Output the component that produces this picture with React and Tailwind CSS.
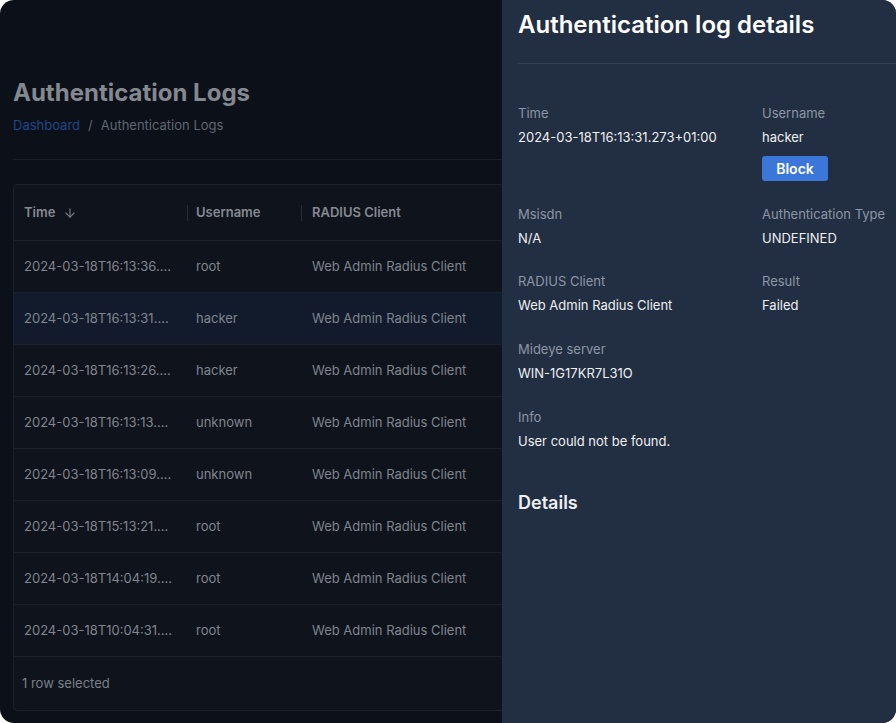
import { ArrowDown } from 'lucide-react';

const rows = [
  { time: '2024-03-18T16:13:36.…', user: 'root' },
  { time: '2024-03-18T16:13:31.…', user: 'hacker', selected: true },
  { time: '2024-03-18T16:13:26.…', user: 'hacker' },
  { time: '2024-03-18T16:13:13.…', user: 'unknown' },
  { time: '2024-03-18T16:13:09.…', user: 'unknown' },
  { time: '2024-03-18T15:13:21.…', user: 'root' },
  { time: '2024-03-18T14:04:19.…', user: 'root' },
  { time: '2024-03-18T10:04:31.…', user: 'root' },
];

function Field({ label, value, className = '', children }) {
  return (
    <div className={className}>
      <div className="text-[13px] leading-5 text-[#8d96a4]">{label}</div>
      <div className="mt-1 text-[13px] leading-5 text-[#eef0f3]">{value}</div>
      {children}
    </div>
  );
}

export default function App() {
  return (
    <div className="w-[896px] h-[723px] bg-white" style={{ fontFamily: 'Inter, "Noto Sans", sans-serif' }}>
      <div className="w-full h-full rounded-[14px] overflow-hidden flex bg-[#0c1119]">
        {/* dimmed page */}
        <div className="w-[502px] shrink-0 overflow-hidden pl-[13px] pt-[77px]">
          <div className="w-[560px]">
            <h1 className="text-[24px] leading-8 font-bold text-[#84888f]">Authentication Logs</h1>
            <div className="mt-[6px] text-[13px] leading-5 text-[#5f6670] flex gap-2">
              <span className="text-[#1f4787]">Dashboard</span>
              <span>/</span>
              <span>Authentication Logs</span>
            </div>
            <div className="mt-[24px] h-px bg-[#1a2029]" />
            <div className="mt-[24px] border border-[#1b212a] rounded-[4px] bg-[#0e131c] text-[13px]">
              <div className="grid grid-cols-[173px_114px_1fr] h-[56px] items-center border-b border-[#1b212a] font-semibold text-[#858a91]">
                <div className="pl-[10px] flex items-center gap-2">
                  Time <ArrowDown size={14} strokeWidth={2} className="text-[#767b82]" />
                </div>
                <div className="flex items-center">
                  <span className="w-px h-[16px] bg-[#2a3039]" />
                  <span className="pl-[8px]">Username</span>
                </div>
                <div className="flex items-center">
                  <span className="w-px h-[16px] bg-[#2a3039]" />
                  <span className="pl-[10px]">RADIUS Client</span>
                </div>
              </div>
              {rows.map((r) => (
                <div
                  key={r.time}
                  className={`grid grid-cols-[173px_114px_1fr] h-[52px] items-center border-b border-[#1b212a] text-[#80858c] ${r.selected ? 'bg-[#111b2c]' : ''}`}
                >
                  <div className="pl-[10px]">{r.time}</div>
                  <div className="pl-[9px]">{r.user}</div>
                  <div className="pl-[11px]">Web Admin Radius Client</div>
                </div>
              ))}
              <div className="h-[53px] flex items-center pl-[8px] text-[13px] text-[#7b8087]">1 row selected</div>
            </div>
          </div>
        </div>

        {/* drawer */}
        <div className="flex-1 bg-[#222e42] pl-4 pt-[9px]">
          <h2 className="text-[24px] leading-8 font-semibold text-white">Authentication log details</h2>
          <div className="mt-[22px] h-px bg-[#344055]" />
          <div className="mt-[39px] grid grid-cols-[244px_1fr] gap-y-[23px]">
            <Field label="Time" value="2024-03-18T16:13:31.273+01:00" />
            <Field label="Username" value="hacker">
              <button className="mt-[9px] h-[25px] w-[66px] rounded-[3px] bg-[#3b77d8] text-[14px] font-semibold text-white">
                Block
              </button>
            </Field>
            <Field label="Msisdn" value="N/A" />
            <Field label="Authentication Type" value="UNDEFINED" />
            <Field label="RADIUS Client" value="Web Admin Radius Client" />
            <Field label="Result" value="Failed" />
            <Field label="Mideye server" value="WIN-1G17KR7L31O" className="mt-px" />
            <div />
            <Field label="Info" value="User could not be found." className="mt-px" />
            <div />
          </div>
          <h3 className="mt-[38px] text-[18px] leading-7 font-semibold text-[#eef0f3]">Details</h3>
        </div>
      </div>
    </div>
  );
}
